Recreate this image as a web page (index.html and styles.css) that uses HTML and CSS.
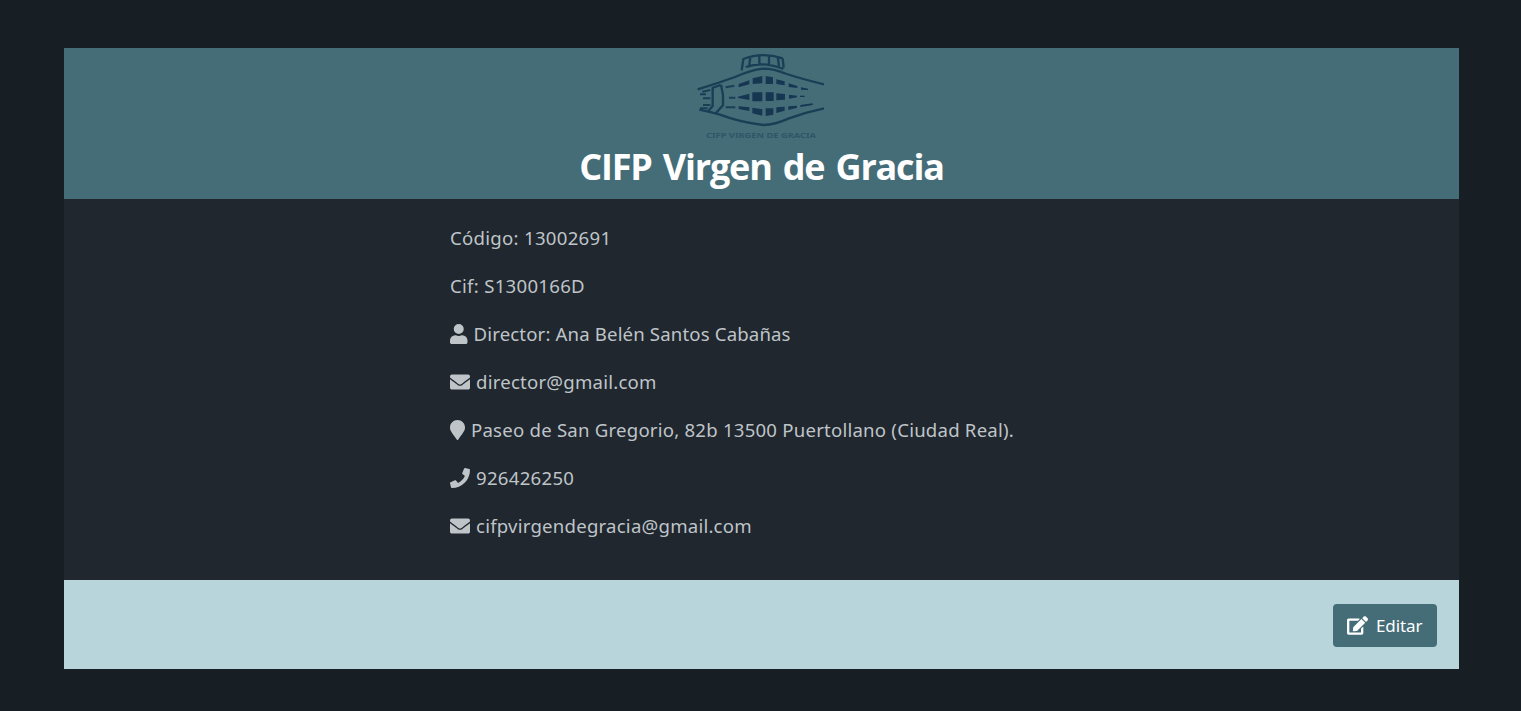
FILE: index.html
```html
<!DOCTYPE html>
<html lang="es">
<head>
<meta charset="utf-8">
<title>CIFP Virgen de Gracia</title>
<link rel="stylesheet" href="styles.css">
</head>
<body>
<main class="card">
  <header class="card-header">
    <svg class="logo" viewBox="0 12 480 288" fill="none" stroke="#133750" stroke-width="7">
      <path d="M53 136Q110 119 165 99Q218 76 250 74Q280 74 320 90Q370 106 432 121"/>
      <path d="M58 197Q88 203 120 212Q180 235 250 243Q286 242 325 224Q375 205 432 193"/>
      <path d="M185 79L190 45Q245 23 308 43M197 69Q250 51 310 75M211 39L207 70M238 34V63M267 34V63M293 38L297 67M308 43L311 71" stroke-width="7"/>
      <path d="M98 130V186L83 203M123 122L129 153V184L107 208M96 132L122 123" stroke-width="7"/>
      <path d="M67 143L91 138M69 163H91M69 183H91M60 151H78M60 193H83M137 130L163 125M147 161H166M137 190H166" stroke-width="6"/>
      <g fill="#102d4c" stroke="none">
        <path d="M176 120L208 109V121L176 130ZM218 103L247 96V118L218 120ZM257 96L279 100V120H257ZM289 106L314 112V124L289 120ZM326 118L352 126V132L326 129ZM363 130L384 134V138L363 137Z"/>
        <path d="M174 158L208 149V168L174 162ZM217 145H247V172H217ZM257 145H281V171H257ZM289 148L315 150V167L289 169ZM327 152L351 155V160L327 164ZM360 155H374V159H360Z"/>
        <path d="M176 187L208 190V201L176 195ZM217 191L247 196V215L217 208ZM257 193H280V212L257 216ZM289 190L314 188V200L289 207ZM325 187L351 185V191L325 198ZM361 183L398 178V183L361 189Z"/>
      </g>
      <text x="78" y="283" textLength="330" lengthAdjust="spacingAndGlyphs" class="logo-text">CIFP VIRGEN DE GRACIA</text>
    </svg>
    <h1 class="title">CIFP Virgen de Gracia</h1>
  </header>
  <section class="details">
    <p class="row"><span class="text code">Código: 13002691</span></p>
    <p class="row"><span class="text code">Cif: S1300166D</span></p>
    <p class="row"><svg class="icon user" viewBox="0 0 448 512"><path d="M224 256a128 128 0 1 0 0-256 128 128 0 0 0 0 256zm90 32h-17a174 174 0 0 1-146 0h-17A134 134 0 0 0 0 422v42c0 27 21 48 48 48h352c27 0 48-21 48-48v-42a134 134 0 0 0-134-134z"/></svg><span class="text director">Director: Ana Belén Santos Cabañas</span></p>
    <p class="row"><svg class="icon" viewBox="0 0 512 512"><path d="M502.300 190.800c3.900-3.100 9.700-.2 9.700 4.700V400c0 26.500-21.500 48-48 48H48c-26.500 0-48-21.500-48-48V195.600c0-5 5.700-7.800 9.700-4.700 22.400 17.400 52.100 39.500 154.100 113.600 21.100 15.400 56.700 47.800 92.200 47.600 35.700.3 72-32.800 92.300-47.600 102-74.100 131.600-96.300 154-113.700zM256 320c23.200.4 56.600-29.200 73.400-41.400 132.700-96.300 142.800-104.700 173.400-128.700 5.800-4.500 9.200-11.500 9.200-18.900v-19c0-26.500-21.500-48-48-48H48c-26.500 0-48 21.500-48 48v19c0 7.400 3.400 14.300 9.200 18.900 30.600 23.900 40.700 32.400 173.400 128.700 16.800 12.200 50.200 41.800 73.400 41.400z"/></svg><span class="text">director@gmail.com</span></p>
    <p class="row"><svg class="icon marker" viewBox="0 0 384 512"><path d="M172.300 501.700C27 291 0 269.400 0 192 0 86 86 0 192 0s192 86 192 192c0 77.400-27 99-172.300 309.700a24 24 0 0 1-39.400 0z"/></svg><span class="text">Paseo de San Gregorio, 82b 13500 Puertollano (Ciudad Real).</span></p>
    <p class="row"><svg class="icon" viewBox="0 0 512 512"><path d="M493.400 24.600l-104-24c-11.300-2.600-22.900 3.300-27.500 13.900l-48 112c-4.200 9.800-1.400 21.300 6.900 28l60.600 49.600c-36 76.700-98.900 140.500-177.200 177.200l-49.600-60.600c-6.800-8.300-18.200-11.100-28-6.900l-112 48C3.900 366.500-2 378.100.6 389.400l24 104C27.100 504.200 36.700 512 48 512c256.100 0 464-207.500 464-464 0-11.200-7.700-20.900-18.600-23.400z"/></svg><span class="text code">926426250</span></p>
    <p class="row"><svg class="icon" viewBox="0 0 512 512"><path d="M502.300 190.800c3.900-3.100 9.700-.2 9.700 4.700V400c0 26.500-21.500 48-48 48H48c-26.500 0-48-21.500-48-48V195.600c0-5 5.700-7.800 9.700-4.700 22.400 17.400 52.100 39.500 154.100 113.600 21.100 15.400 56.700 47.800 92.200 47.600 35.700.3 72-32.800 92.300-47.600 102-74.100 131.600-96.300 154-113.700zM256 320c23.200.4 56.600-29.200 73.400-41.400 132.700-96.300 142.800-104.700 173.400-128.700 5.800-4.500 9.200-11.500 9.200-18.900v-19c0-26.500-21.500-48-48-48H48c-26.500 0-48 21.500-48 48v19c0 7.400 3.400 14.300 9.200 18.900 30.600 23.900 40.700 32.400 173.400 128.700 16.800 12.200 50.200 41.800 73.400 41.400z"/></svg><span class="text">cifpvirgendegracia@gmail.com</span></p>
  </section>
  <footer class="card-footer">
    <button class="edit" type="button"><svg class="edit-icon" viewBox="0 0 576 512"><path d="M402.600 83.200l90.200 90.200c3.800 3.800 3.800 10 0 13.800L274.400 405.600l-92.800 10.300c-12.400 1.400-22.900-9.100-21.500-21.500l10.300-92.800L388.800 83.200c3.800-3.800 10-3.800 13.800 0zm162-22.900l-48.800-48.800c-15.200-15.200-39.900-15.200-55.200 0l-35.400 35.400c-3.800 3.800-3.800 10 0 13.800l90.200 90.200c3.800 3.800 10 3.800 13.800 0l35.400-35.400c15.200-15.300 15.200-40 0-55.200zM384 346.200V448H64V128h229.800c3.200 0 6.200-1.300 8.500-3.500l40-40c7.600-7.600 2.200-20.500-8.500-20.500H48C21.500 64 0 85.500 0 112v352c0 26.500 21.500 48 48 48h352c26.500 0 48-21.500 48-48V306.200c0-10.700-12.900-16-20.500-8.500l-40 40c-2.200 2.300-3.500 5.300-3.500 8.500z"/></svg><span class="edit-label">Editar</span></button>
  </footer>
</main>
</body>
</html>
```
FILE: styles.css
```css
* { box-sizing: border-box; }
body {
  margin: 0;
  min-height: 711px;
  padding: 48px 62px 42px 64px;
  background: #171e24;
  color: #bfc4c9;
  font-family: "Noto Sans", "Open Sans", sans-serif;
}
.card { background: #20272e; }
.card-header {
  height: 151px;
  display: flex;
  flex-direction: column;
  align-items: center;
  background: #446d78;
}
.logo { display: block; width: 160px; height: 96px; margin-right: 3px; opacity: .85; }
.logo-text { font: 700 23px "Noto Sans", sans-serif; fill: #1c455c; stroke: none; opacity: .65; }
.title {
  margin: 0;
  font: 700 36px/45px "Open Sans", sans-serif;
  letter-spacing: -1.2px;
  word-spacing: 3px;
  color: #fff;
  white-space: nowrap;
}
.details { height: 381px; padding: 15px 0 0 386px; }
.row {
  display: flex;
  align-items: center;
  gap: 6px;
  height: 48px;
  margin: 0;
  font-size: 18.600px;
  white-space: nowrap;
}
.text { margin-bottom: 2px; letter-spacing: .22px; }
.code { letter-spacing: .28px; }
.director { letter-spacing: .15px; }
.icon { width: 20px; height: 20px; margin-bottom: 1px; fill: currentColor; flex: none; }
.user { width: 17.500px; }
.marker { width: 15px; }
.card-footer {
  height: 89px;
  padding: 0 22px 0 0;
  display: flex;
  justify-content: flex-end;
  align-items: center;
  background: #b8d5dc;
}
.edit {
  width: 104px;
  height: 43px;
  margin-top: 2px;
  padding: 0 0 0 14px;
  display: flex;
  align-items: center;
  gap: 8px;
  border: 0;
  border-radius: 4px;
  background: #446d78;
  color: #fff;
  font: 17px "Noto Sans", sans-serif;
}
.edit-icon { width: 21px; height: 19px; fill: currentColor; }
.edit-label { letter-spacing: -.1px; }
```
